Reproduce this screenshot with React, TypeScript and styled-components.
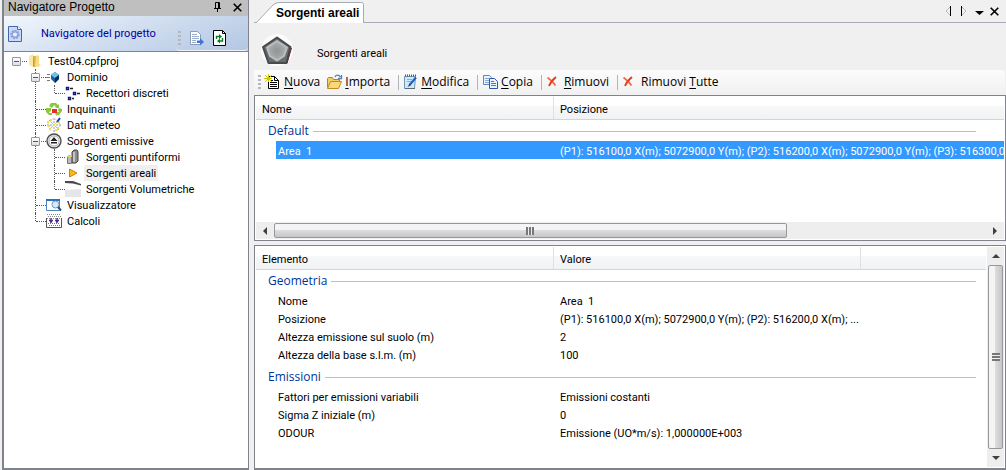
import React from "react";
import styled, { createGlobalStyle, css } from "styled-components";

const Global = createGlobalStyle`
  *, *::before, *::after { box-sizing: border-box; }
  html, body, #root { height: 100%; }
  body { margin: 0; background: #f0f0f0; font-family: Roboto, "Liberation Sans", Arial, sans-serif; font-size: 11px; color: #000; overflow: hidden; }
  button { font: inherit; color: inherit; border: 0; background: none; padding: 0; margin: 0; }
  a { color: inherit; text-decoration: none; }
  svg { display: block; flex: none; }
`;

const Shell = styled.div`
  display: flex;
  height: 100vh;
  min-height: 300px;
  gap: 5px;
  padding-left: 2px;
  background: #f0f0f0;
`;

const Navigator = styled.aside`
  flex: none;
  width: 247px;
  display: flex;
  flex-direction: column;
  background: #fff;
  border: solid #80838c;
  border-width: 0 1px 2px 2px;
`;

const TitleBar = styled.header`
  height: 16px;
  flex: none;
  display: flex;
  align-items: center;
  gap: 8px;
  padding: 0 5px 2px 4px;
  background: #bfbfbf;
`;

const PanelTitle = styled.h1`
  margin: 0;
  flex: 1;
  font-family: "Liberation Sans", Arial, sans-serif;
  font-size: 12px;
  font-weight: 400;
  line-height: 14px;
`;

const NavBand = styled.div`
  height: 36px;
  flex: none;
  display: flex;
  align-items: center;
  padding-left: 4px;
  background: linear-gradient(160deg, #f3f7fc 0%, #dae5f4 35%, #b3c6e3 100%);
  border-bottom: 1px solid #80838c;
`;

const NavLabel = styled.span`
  flex: 1;
  padding: 0 0 0 19px;
  color: #00009c;
  line-height: 14px;
`;

const NavTools = styled.div`
  align-self: stretch;
  width: 72px;
  margin-top: 10px;
  display: flex;
  align-items: center;
  gap: 9px;
  padding-left: 2px;
  border-bottom: 1px solid #eef3fa;
  border-radius: 4px;
`;

const Grip = styled.span`
  width: 3px;
  height: 15px;
  flex: none;
  background: repeating-linear-gradient(#b4b8be 0 2px, transparent 2px 4px);
`;

const IconButton = styled.button`
  display: grid;
  place-items: center;
  min-width: 12px;
  height: 16px;
`;

const Tree = styled.ul<{ $root?: boolean }>`
  list-style: none;
  margin: 0;
  padding: ${(p) => (p.$root ? "1px 0 0 7px" : "0 0 0 19px")};
`;

const TreeItem = styled.li<{ $child?: boolean; $last?: boolean }>`
  position: relative;
  ${(p) =>
    p.$child &&
    css`
      &::before {
        content: "";
        position: absolute;
        left: 5px;
        top: 0;
        height: ${p.$last ? "8px" : "100%"};
        border-left: 1px dotted #555;
      }
    `}
`;

const TreeRow = styled.div`
  display: flex;
  align-items: center;
  height: 16px;
`;

const Branch = styled.span`
  position: relative;
  width: 16px;
  height: 16px;
  flex: none;
  display: flex;
  align-items: center;
  padding-left: 1px;
  &::before {
    content: "";
    position: absolute;
    left: 6px;
    right: 0;
    top: 8px;
    border-top: 1px dotted #555;
  }
`;

const Expander = styled.button`
  position: relative;
  width: 9px;
  height: 9px;
  border: 1px solid #9097a0;
  border-radius: 1px;
  background: linear-gradient(#fff, #dcdfe4);
  &::after {
    content: "";
    position: absolute;
    inset: 3px 1px;
    background: #3a55a0;
  }
`;

const TreeLabel = styled.a<{ $active?: boolean }>`
  height: 16px;
  line-height: 14px;
  padding: 2px 2px 0;
  margin-left: 3px;
  white-space: nowrap;
  background: ${(p) => (p.$active ? "#efefef" : "transparent")};
`;

const Main = styled.main`
  flex: 1;
  min-width: 0;
  display: flex;
  flex-direction: column;
`;

const TabStrip = styled.div`
  height: 23px;
  flex: none;
  display: flex;
  align-items: flex-end;
  justify-content: space-between;
  border-bottom: 1px solid #a6aab4;
`;

const TabShape = styled.div`
  position: relative;
  width: 110px;
  height: 21px;
  margin-bottom: -1px;
  svg { position: absolute; inset: 0; }
`;

const Tab = styled.button`
  position: relative;
  width: 100%;
  height: 100%;
  padding: 0 0 0 22px;
  text-align: left;
  font-family: "Liberation Sans", Arial, sans-serif;
  font-size: 12px;
  font-weight: 700;
  white-space: nowrap;
`;

const TabControls = styled.div`
  display: flex;
  gap: 3px;
  padding: 0 6px 3px 0;
`;

const PageHead = styled.div`
  height: 47px;
  flex: none;
  display: flex;
  align-items: center;
  gap: 24px;
  padding: 6px 0 0 7px;
  h2 { margin: 0; padding-top: 8px; font-size: 11px; font-weight: 400; line-height: 14px; }
`;

const Toolbar = styled.div`
  height: 25px;
  flex: none;
  display: flex;
  align-items: center;
  padding-left: 4px;
  margin-right: 1px;
  border-radius: 0 4px 4px 0;
  background: linear-gradient(#fcfcfc, #f0f0f0);
  font-family: "Open Sans", "Noto Sans", sans-serif;
`;

const ToolButton = styled.button<{ $gap?: number }>`
  display: flex;
  align-items: center;
  gap: ${(p) => p.$gap ?? 4}px;
  height: 22px;
  padding: 0 3px 2px;
  font-size: 12px;
  line-height: 16px;
  white-space: nowrap;
  u { text-underline-offset: 2px; }
`;

const Separator = styled.span`
  width: 1px;
  height: 15px;
  margin: 0 2px 0 5px;
  background: #b4b4b8;
`;

const Pane = styled.section<{ $grow?: boolean }>`
  display: flex;
  flex-direction: ${(p) => (p.$grow ? "row" : "column")};
  min-height: 0;
  ${(p) => (p.$grow ? "flex: 1;" : "height: 146px; flex: none; margin-bottom: 4px;")}
  border: 1px solid #80838c;
  ${(p) => p.$grow && "border-bottom-width: 2px;"}
  background: #fff;
`;

const Scroller = styled.div`
  flex: 1;
  min-width: 0;
  min-height: 0;
  overflow: hidden;
  padding: 1px;
`;

const Grid = styled.table`
  width: 100%;
  table-layout: fixed;
  border-collapse: separate;
  border-spacing: 0;
`;

const Col = styled.col<{ $width?: number }>`
  ${(p) => p.$width && `width: ${p.$width}px;`}
`;

const HeadCell = styled.th`
  height: 23px;
  padding: 2px 6px 0;
  text-align: left;
  font-weight: 400;
  border-right: 1px solid #dfe0e2;
  border-bottom: 1px solid #d3d4d6;
  background: linear-gradient(#fff 0 40%, #f7f8fa 40%, #f1f2f4);
  &:last-child { border-right: 0; }
`;

const GroupCell = styled.th<{ $wide?: boolean }>`
  padding: 0 ${(p) => (p.$wide ? "28px" : "10px")} 0 12px;
  font-family: "Open Sans", "Noto Sans", sans-serif;
  font-size: 12px;
  font-weight: 400;
  color: #003399;
  tbody + tbody & { padding-top: 3px; }
  span { display: flex; align-items: center; gap: 4px; height: 21px; padding-top: 1px; line-height: 20px; }
  span::after { content: ""; flex: 1; height: 1px; background: #b0c0e2; }
`;

const Cell = styled.td<{ $first?: boolean; $selected?: boolean }>`
  height: 18px;
  padding: 2px 0 0 ${(p) => (p.$first ? "22px" : "6px")};
  white-space: pre;
  overflow: hidden;
  text-overflow: clip;
  ${(p) =>
    p.$selected &&
    css`
      color: #fff;
      background: ${p.$first ? "linear-gradient(90deg, #fff 20px, #3399ff 20px)" : "#3399ff"};
    `}
`;

const HScroll = styled.div`
  display: flex;
  align-items: center;
  height: 17px;
  flex: none;
  margin: 0 1px 1px;
  background: #eeeeee;
`;

const VScroll = styled.div`
  display: flex;
  flex-direction: column;
  align-items: center;
  width: 17px;
  flex: none;
  margin: 1px 1px 1px 0;
  background: #eeeeee;
`;

const ScrollArrow = styled.button`
  width: 18px;
  height: 18px;
  flex: none;
  display: grid;
  place-items: center;
`;

const Track = styled.div`
  flex: 1;
`;

const Thumb = styled.div<{ $vertical?: boolean }>`
  display: grid;
  place-items: center;
  border: 1px solid #989898;
  border-radius: 2px;
  ${(p) =>
    p.$vertical
      ? "width: 15px; flex: 1; background: linear-gradient(90deg, #f4f4f4 0 45%, #dcdcde 50%, #c6c6ca);"
      : "height: 15px; width: 72%; background: linear-gradient(#f4f4f4 0 45%, #dcdcde 50%, #c6c6ca);"}
`;

const Ridges = styled.span<{ $vertical?: boolean }>`
  width: 8px;
  height: 8px;
  background: ${(p) =>
    p.$vertical
      ? "repeating-linear-gradient(#777 0 2px, #eee 2px 3px)"
      : "repeating-linear-gradient(90deg, #777 0 2px, #eee 2px 3px)"};
`;

type ArrowDir = "left" | "right" | "up" | "down";
const arrowPoints: Record<ArrowDir, string> = {
  left: "6,0 6,8 2,4",
  right: "2,0 2,8 6,4",
  up: "0,6 8,6 4,2",
  down: "0,2 8,2 4,6",
};
const Arrow = ({ dir }: { dir: ArrowDir }) => (
  <svg width="8" height="8" viewBox="0 0 8 8" aria-hidden="true">
    <polygon points={arrowPoints[dir]} fill="#404040" />
  </svg>
);

const Cross = ({ size = 9 }: { size?: number }) => (
  <svg width={size} height={size} viewBox="0 0 9 9" aria-hidden="true">
    <path d="M.7.7 8.3 8.3M8.3.7.7 8.3" stroke="#000" strokeWidth="1.6" />
  </svg>
);

const Pin = () => (
  <svg width="9" height="10" viewBox="0 0 9 10" aria-hidden="true">
    <path d="M2.5 6V.5h4V6M5.5 1v5M1 6.5h7M4.5 7v3" fill="none" stroke="#000" />
  </svg>
);

type IconName =
  | "folder" | "domain" | "receptors" | "recycle" | "meteo" | "emission"
  | "stack" | "arrow" | "volume" | "viewer" | "calc";

const drawings: Record<IconName, React.ReactNode> = {
  folder: (
    <>
      <path d="M2 3 6 1l1 2v11l-4-1-1-2z" fill="#f8e7a8" />
      <path d="M6 3h3l1 2v9H6z" fill="#dfb63e" />
      <path d="M9 2l3 1v8l2 1-3 2H8z" fill="#f6dc83" />
      <path d="M6.500 5v8" stroke="#c79c30" />
    </>
  ),
  domain: (
    <>
      <path d="M1 5.500h3M0 8.500h4M1 11.500h3" stroke="#777" />
      <path d="M9 3l4 3v4l-4 4-4-4V6z" fill="#1c629e" />
      <path d="M9 3l4 3-4 3-4-3z" fill="#6cc3ee" />
      <path d="M9 9v5l4-4V6z" fill="#0b2c58" />
    </>
  ),
  receptors: (
    <>
      <path d="M1.500 2.500h2v2h-2zM8.500 7.500h2v2h-2zM3.500 12.500h2v2h-2z" fill="#fff" stroke="#14147a" strokeWidth="1.400" />
      <path d="M5 3.500h3M12 8.500h3M7 13.500h2" stroke="#222" strokeWidth="1.400" />
    </>
  ),
  recycle: (
    <>
      <path d="M5 2h5l2 2 1-1v4H9l1-1-2-2-2 3-3-2z" fill="#8cc63f" />
      <path d="M0 7h5v4L4 10l-1 2h3v2H3L0 11zM16 8l-3-1-1 2 1 2h-2v-1l-2 3 2 2v-1h2l3-4z" fill="#8cc63f" />
      <path d="M6 8h5v4H6z" fill="#ee2a24" />
    </>
  ),
  meteo: (
    <>
      <path d="M8 1v14M1 8h14M3 3l10 10M13 3 3 13" stroke="#a0a0a0" strokeDasharray="2 1" />
      <circle cx="8" cy="8" r="6" fill="none" stroke="#c0c0c0" strokeDasharray="2 2" />
      <path d="M5 2v2M1 5h2M11 11h2M4 11v2M12 6h2M7 8h2M2 9h2M9 13h2" stroke="#ece24a" strokeWidth="2" />
      <path d="M11 5l3-4" stroke="#1735c8" strokeWidth="2" />
    </>
  ),
  emission: (
    <>
      <circle cx="8" cy="8" r="7" fill="#e9e9e9" stroke="#4c4c4c" strokeWidth="1.400" />
      <circle cx="8" cy="8" r="5" fill="#fff" stroke="#b0b0b0" />
      <path d="M8 4l3.500 4h-7zM5 9h6v1.500H5z" fill="#222" />
    </>
  ),
  stack: (
    <>
      <path d="M7 3l2-2h3l1 2v9l-2 2H7z" fill="#8d8d8d" stroke="#444" />
      <path d="M9 3v10" stroke="#d8d8d8" strokeWidth="1.500" />
      <path d="M2.500 8.500l1-2h3v8h-4z" fill="#bcbcbc" stroke="#777" />
      <path d="M3 7h4" stroke="#f4e53c" strokeWidth="1.500" />
    </>
  ),
  arrow: <path d="M4.500 4 12 8l-7.500 4z" fill="#fbb818" stroke="#c88408" />,
  volume: (
    <>
      <path d="M0 0h8l8 3v1.500L8 2.500 0 2z" fill="#4a4a4a" />
      <path d="M0 9l16-1v8H0z" fill="#e6e6e6" />
    </>
  ),
  viewer: (
    <>
      <path d="M.500 2.500h13v11H.500z" fill="#fff" stroke="#4b84c4" />
      <path d="M0 2h14v2H0z" fill="#2e6fc0" />
      <circle cx="9.500" cy="7.500" r="3.500" fill="#d4ecfa" stroke="#7b98b0" />
      <path d="M12 10l3 3.500" stroke="#2d4f78" strokeWidth="2" />
    </>
  ),
  calc: (
    <>
      <path d="M1 1.500h14M2 3.500h14M1 5.500h14" stroke="#8a8a8a" strokeDasharray="1 1" />
      <path d="M.500 5v9.500h15V5" fill="none" stroke="#555" />
      <path d="M2 10.500h12M3 12.500h12" stroke="#777" strokeDasharray="1 1" />
      <path d="M5 5v5M11 5v5M3 7.500h4M9 7.500h4M4 8.500h2M10 8.500h2" stroke="#4a2a90" strokeWidth="1.300" />
    </>
  ),
};

const TreeIcon = ({ name }: { name: IconName }) => (
  <svg width="16" height="16" viewBox="0 0 16 16" aria-hidden="true">{drawings[name]}</svg>
);

interface Node {
  label: string;
  icon: IconName;
  active?: boolean;
  children?: Node[];
}

const project: Node = {
  label: "Test04.cpfproj",
  icon: "folder",
  children: [
    { label: "Dominio", icon: "domain", children: [{ label: "Recettori discreti", icon: "receptors" }] },
    { label: "Inquinanti", icon: "recycle" },
    { label: "Dati meteo", icon: "meteo" },
    {
      label: "Sorgenti emissive",
      icon: "emission",
      children: [
        { label: "Sorgenti puntiformi", icon: "stack" },
        { label: "Sorgenti areali", icon: "arrow", active: true },
        { label: "Sorgenti Volumetriche", icon: "volume" },
      ],
    },
    { label: "Visualizzatore", icon: "viewer" },
    { label: "Calcoli", icon: "calc" },
  ],
};

const TreeNode = ({ node, child, last }: { node: Node; child?: boolean; last?: boolean }) => (
  <TreeItem $child={child} $last={last}>
    <TreeRow>
      <Branch>{node.children && <Expander aria-label={`Comprimi ${node.label}`} />}</Branch>
      <TreeIcon name={node.icon} />
      <TreeLabel href="#" $active={node.active}>{node.label}</TreeLabel>
    </TreeRow>
    {node.children && (
      <Tree>
        {node.children.map((c, i) => (
          <TreeNode key={c.label} node={c} child last={i === node.children!.length - 1} />
        ))}
      </Tree>
    )}
  </TreeItem>
);

const GearDoc = () => (
  <svg width="14" height="16" viewBox="0 0 14 16" aria-hidden="true">
    <path d="M.500.500h9l4 3v12H.500z" fill="#c9dcf6" stroke="#4166ad" />
    <path d="M9.500.500v3h4" fill="#fff" stroke="#4166ad" />
    <circle cx="7" cy="8.500" r="4" fill="none" stroke="#8f9fdc" strokeWidth="1.600" strokeDasharray="2 1" />
    <circle cx="7" cy="8.500" r="2.800" fill="#e9f0fb" stroke="#8f9fdc" strokeWidth="1.400" />
  </svg>
);

const ExportDoc = () => (
  <svg width="14" height="15" viewBox="0 0 14 15" aria-hidden="true">
    <path d="M.500.500h7l3 3v10H.500z" fill="#fff" stroke="#8b9dbb" />
    <path d="M2 3.500h5M2 5.500h7M2 7.500h7M2 9.500h4M2 11.500h4" stroke="#9aaed0" />
    <path d="M7 9.500h3V7l4 4-4 3.500V12H7z" fill="#3f76cf" />
  </svg>
);

const RefreshDoc = () => (
  <svg width="13" height="16" viewBox="0 0 13 16" aria-hidden="true">
    <path d="M.500.500h9l3 3v12H.500z" fill="#fff" stroke="#000" />
    <path d="M9.500.500v3h3" fill="none" stroke="#000" />
    <path d="M3.500 9V6.500H7M9.500 8v3H6" fill="none" stroke="#0a7d20" strokeWidth="1.400" />
    <path d="M6 4l3 2.500L6 9zM7 8.500v5L4 11z" fill="#0a7d20" />
  </svg>
);

const Pentagon = () => (
  <svg width="32" height="32" viewBox="0 0 32 32" aria-hidden="true">
    <defs>
      <radialGradient id="face">
        <stop offset="0" stopColor="#919495" />
        <stop offset="1" stopColor="#adb0b1" />
      </radialGradient>
    </defs>
    <circle cx="16" cy="16" r="16" fill="#fbfbfb" />
    <path d="M16 3.500 29.500 13 25.500 29h-18L2 13z" fill="#6a6d70" stroke="#484b4e" strokeWidth="2" strokeLinejoin="round" />
    <path d="M30.500 14 26 29" stroke="#6b2a30" />
    <path d="M16 7 26 13.500 23 22 16 26.500 9 22 6 13.500z" fill="url(#face)" stroke="#bcbec0" strokeWidth="2" strokeLinejoin="round" />
  </svg>
);

const NewDoc = () => (
  <svg width="16" height="16" viewBox="0 0 16 16" aria-hidden="true">
    <path d="M4.500 2.500h6l4 4v8h-10z" fill="#fff" stroke="#000" />
    <path d="M10.500 2.500v4h4M6 6.500h3M6 8.500h7M6 10.500h7M6 12.500h7" fill="none" stroke="#000" />
    <path d="M4.500 0v8M0 4.500h8M1 1l7 7M8 1 1 8" stroke="#c9c416" />
  </svg>
);

const OpenFolder = () => (
  <svg width="17" height="16" viewBox="0 0 17 16" aria-hidden="true">
    <path d="M1.500 13.500v-9l1-1h4l1 2h6v2" fill="#f3cf6a" stroke="#b58422" />
    <path d="M1.500 14.500l3-7h11l-3 7z" fill="#fbd877" stroke="#c08a20" />
    <path d="M9 3c1-2.500 4-2.500 5.500 0M15.500 1v3.500H12" fill="none" stroke="#5a7fae" strokeWidth="1.300" />
  </svg>
);

const EditDoc = () => (
  <svg width="13" height="16" viewBox="0 0 13 16" aria-hidden="true">
    <path d="M.500 2.500h11l-1 12H.500z" fill="#cfe8f8" stroke="#6f97b2" />
    <path d="M1 1.500h11" stroke="#557" strokeDasharray="1 1" strokeWidth="2" />
    <path d="M3 5.500h5M3 7.500h4" stroke="#86b4d4" />
    <path d="M12 3.500 5.500 11" stroke="#1f63c4" strokeWidth="2.200" />
    <path d="M5.500 10 3.500 13l3-1.500z" fill="#333" />
    <path d="M1 14.500h10" stroke="#5c6a70" />
  </svg>
);

const CopyDocs = () => (
  <svg width="16" height="14" viewBox="0 0 16 14" aria-hidden="true">
    <path d="M.500.500h6l2 2v7h-8z" fill="#eaf2fd" stroke="#5f86c6" />
    <path d="M2 3.500h4M2 5.500h5M2 7.500h5" stroke="#86a8dc" />
    <path d="M6.500 3.500h5l3 3v7h-8z" fill="#eaf2fd" stroke="#2f58a8" />
    <path d="M8 6.500h3M8 8.500h5M8 10.500h5" stroke="#4d79c2" />
  </svg>
);

const RedCross = () => (
  <svg width="10" height="11" viewBox="0 0 10 11" aria-hidden="true">
    <path d="M.500 1.500C4 4 6 6 8.500 9.500" stroke="#f0694a" strokeWidth="1.800" fill="none" />
    <path d="M9 1C6 3.500 3.500 6 2 10" stroke="#e63a1c" strokeWidth="1.800" fill="none" />
  </svg>
);

const positions =
  "(P1): 516100,0 X(m); 5072900,0 Y(m); (P2): 516200,0 X(m); 5072900,0 Y(m); (P3): 516300,0 X(m)";

const details = [
  {
    group: "Geometria",
    rows: [
      ["Nome", "Area  1"],
      ["Posizione", "(P1): 516100,0 X(m); 5072900,0 Y(m); (P2): 516200,0 X(m); ..."],
      ["Altezza emissione sul suolo (m)", "2"],
      ["Altezza della base s.l.m. (m)", "100"],
    ],
  },
  {
    group: "Emissioni",
    rows: [
      ["Fattori per emissioni variabili", "Emissioni costanti"],
      ["Sigma Z iniziale (m)", "0"],
      ["ODOUR", "Emissione (UO*m/s): 1,000000E+003"],
    ],
  },
];

export default function App() {
  return (
    <>
      <Global />
      <Shell>
        <Navigator>
          <TitleBar>
            <PanelTitle>Navigatore Progetto</PanelTitle>
            <IconButton aria-label="Blocca"><Pin /></IconButton>
            <IconButton aria-label="Chiudi"><Cross /></IconButton>
          </TitleBar>
          <NavBand>
            <GearDoc />
            <NavLabel>Navigatore del progetto</NavLabel>
            <NavTools>
              <Grip />
              <IconButton aria-label="Esporta"><ExportDoc /></IconButton>
              <IconButton aria-label="Aggiorna"><RefreshDoc /></IconButton>
            </NavTools>
          </NavBand>
          <Tree $root>
            <TreeNode node={project} />
          </Tree>
        </Navigator>

        <Main>
          <TabStrip>
            <TabShape>
              <svg width="110" height="21" viewBox="0 0 110 21" aria-hidden="true">
                <path d="M2 21 19 3q3-2.500 6-2.500h82.500q2 0 2 2V21" fill="#fff" stroke="#a6aab4" />
              </svg>
              <Tab>Sorgenti areali</Tab>
            </TabShape>
            <TabControls>
              <IconButton aria-label="Scheda precedente">
                <svg width="7" height="10" viewBox="0 0 7 10"><path d="M4 1 0 5l4 4" fill="none" stroke="#bbb" /><path d="M4.500 0v10" stroke="#000" /></svg>
              </IconButton>
              <IconButton aria-label="Scheda successiva">
                <svg width="7" height="10" viewBox="0 0 7 10"><path d="M1 1l4 4-4 4" fill="none" stroke="#bbb" /><path d="M.500 0v10" stroke="#000" /></svg>
              </IconButton>
              <IconButton aria-label="Elenco schede">
                <svg width="9" height="10" viewBox="0 0 9 10"><path d="M0 5h9L4.500 9z" /></svg>
              </IconButton>
              <IconButton aria-label="Chiudi scheda"><Cross /></IconButton>
            </TabControls>
          </TabStrip>

          <PageHead>
            <Pentagon />
            <h2>Sorgenti areali</h2>
          </PageHead>

          <Toolbar role="toolbar">
            <Grip />
            <ToolButton><NewDoc /><span><u>N</u>uova</span></ToolButton>
            <ToolButton $gap={2}><OpenFolder /><span><u>I</u>mporta</span></ToolButton>
            <Separator />
            <ToolButton><EditDoc /><span><u>M</u>odifica</span></ToolButton>
            <Separator />
            <ToolButton $gap={2}><CopyDocs /><span><u>C</u>opia</span></ToolButton>
            <Separator />
            <ToolButton $gap={7}><RedCross /><span><u>R</u>imuovi</span></ToolButton>
            <Separator />
            <ToolButton $gap={8}><RedCross /><span>Rimuovi <u>T</u>utte</span></ToolButton>
          </Toolbar>

          <Pane>
            <Scroller>
              <Grid>
                <colgroup><Col $width={298} /><Col /></colgroup>
                <thead><tr><HeadCell>Nome</HeadCell><HeadCell>Posizione</HeadCell></tr></thead>
                <tbody>
                  <tr><GroupCell colSpan={2} $wide><span>Default</span></GroupCell></tr>
                  <tr>
                    <Cell $first $selected>{"Area  1"}</Cell>
                    <Cell $selected>{positions}</Cell>
                  </tr>
                </tbody>
              </Grid>
            </Scroller>
            <HScroll>
              <ScrollArrow aria-label="Scorri a sinistra"><Arrow dir="left" /></ScrollArrow>
              <Track><Thumb><Ridges /></Thumb></Track>
              <ScrollArrow aria-label="Scorri a destra"><Arrow dir="right" /></ScrollArrow>
            </HScroll>
          </Pane>

          <Pane $grow>
            <Scroller>
              <Grid>
                <colgroup><Col $width={298} /><Col $width={307} /><Col /></colgroup>
                <thead><tr><HeadCell>Elemento</HeadCell><HeadCell>Valore</HeadCell><HeadCell /></tr></thead>
                {details.map((g) => (
                  <tbody key={g.group}>
                    <tr><GroupCell colSpan={3}><span>{g.group}</span></GroupCell></tr>
                    {g.rows.map(([name, value]) => (
                      <tr key={name}><Cell $first>{name}</Cell><Cell colSpan={2}>{value}</Cell></tr>
                    ))}
                  </tbody>
                ))}
              </Grid>
            </Scroller>
            <VScroll>
              <ScrollArrow aria-label="Scorri in alto"><Arrow dir="up" /></ScrollArrow>
              <Thumb $vertical><Ridges $vertical /></Thumb>
              <ScrollArrow aria-label="Scorri in basso"><Arrow dir="down" /></ScrollArrow>
            </VScroll>
          </Pane>
        </Main>
      </Shell>
    </>
  );
}
